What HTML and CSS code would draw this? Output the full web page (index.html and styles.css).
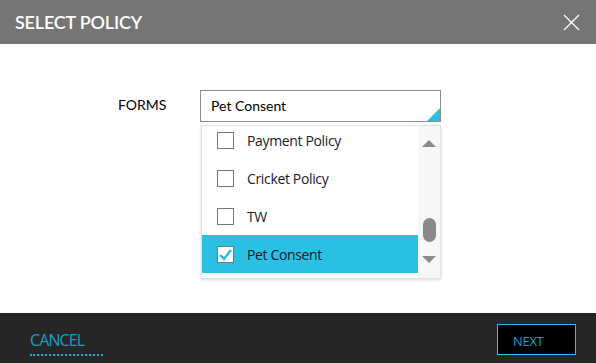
FILE: index.html
```html
<!DOCTYPE html>
<html lang="en">
<head>
    <meta charset="UTF-8">
    <title>Select Policy</title>
    <link rel="stylesheet" href="styles.css">
</head>
<body>
    <div class="dialog">
        <div class="dialog-header">
            <h1>SELECT POLICY</h1>
            <button class="close-btn" aria-label="Close">
                <svg width="17" height="17" viewBox="0 0 17 17">
                    <path d="M1 1 L16 16 M16 1 L1 16" stroke="#fff" stroke-width="1.3" fill="none"/>
                </svg>
            </button>
        </div>

        <div class="dialog-body">
            <div class="form-row">
                <label class="form-label">FORMS</label>
                <div class="select">
                    <div class="select-box">Pet Consent</div>
                    <div class="dropdown">
                        <div class="dropdown-list">
                            <div class="option"><span class="checkbox"></span>Payment Policy</div>
                            <div class="option"><span class="checkbox"></span>Cricket Policy</div>
                            <div class="option"><span class="checkbox"></span>TW</div>
                            <div class="option selected">
                                <span class="checkbox">
                                    <svg width="15" height="15" viewBox="0 0 15 15">
                                        <path d="M2 8 L6 12 L13 3" stroke="#29b9e2" stroke-width="2.4" fill="none"/>
                                    </svg>
                                </span>Pet Consent
                            </div>
                        </div>
                        <div class="scrollbar">
                            <span class="arrow-up"></span>
                            <span class="thumb"></span>
                            <span class="arrow-down"></span>
                        </div>
                    </div>
                </div>
            </div>
        </div>

        <div class="dialog-footer">
            <a class="cancel-link" href="#">CANCEL</a>
            <button class="btn-next">NEXT</button>
        </div>
    </div>
</body>
</html>
```

FILE: styles.css
```css
:root {
    --header-bg: #757575;
    --footer-bg: #262626;
    --accent: #29c0e4;
    --link: #1a9cc7;
}

body {
    margin: 0;
    font-family: 'Lato', 'Open Sans', sans-serif;
    background: #fff;
}

.dialog {
    width: 596px;
    height: 363px;
    display: flex;
    flex-direction: column;
}

.dialog-header {
    height: 44px;
    background: var(--header-bg);
    display: flex;
    align-items: center;
    justify-content: space-between;
    padding: 0 15px 0 15px;
    box-sizing: border-box;
}

.dialog-header h1 {
    margin: 0;
    color: #fff;
    font-size: 18px;
    font-weight: 600;
    letter-spacing: -0.2px;
}

.close-btn {
    background: none;
    border: none;
    padding: 0;
    margin-right: 1px;
    width: 17px;
    height: 17px;
    display: flex;
}

.dialog-body {
    flex: 1;
    padding-top: 46px;
}

.form-row {
    display: flex;
    padding-left: 118px;
}

.form-label {
    width: 82px;
    height: 32px;
    line-height: 30px;
    font-size: 14px;
    color: #000;
}

.select {
    position: relative;
}

.select-box {
    width: 241px;
    height: 32px;
    box-sizing: border-box;
    border: 1px solid #8c8c8c;
    padding-left: 10px;
    line-height: 30px;
    font-size: 14px;
    color: #000;
    position: relative;
}

.select-box::after {
    content: '';
    position: absolute;
    right: 0;
    bottom: 0;
    border-left: 13px solid transparent;
    border-bottom: 13px solid var(--accent);
}

.dropdown {
    position: absolute;
    top: 35px;
    left: 1px;
    width: 240px;
    height: 154px;
    box-sizing: border-box;
    border: 1px solid #e2e2e2;
    background: #fff;
    box-shadow: 0 1px 3px rgba(0, 0, 0, 0.15);
    display: flex;
    overflow: hidden;
}

.dropdown-list {
    width: 216px;
    margin-top: -5px;
    font-family: 'Open Sans', 'Noto Sans', sans-serif;
    font-size: 14px;
    letter-spacing: -0.35px;
    color: #1a1a2a;
}

.option {
    height: 38px;
    display: flex;
    align-items: center;
    padding-left: 15px;
}

.option.selected {
    background: var(--accent);
}

.checkbox {
    width: 17px;
    height: 17px;
    box-sizing: border-box;
    border: 1px solid #777;
    background: #fff;
    margin-right: 13px;
    display: flex;
    align-items: center;
    justify-content: center;
}

.scrollbar {
    flex: 1;
    background: #f7f7f7;
    display: flex;
    flex-direction: column;
    align-items: center;
}

.arrow-up {
    margin-top: 14px;
    border-left: 7.5px solid transparent;
    border-right: 7.5px solid transparent;
    border-bottom: 7px solid #8a8a8a;
}

.thumb {
    margin-top: 71px;
    width: 13px;
    height: 24px;
    border-radius: 7px;
    background: #8a8a8a;
}

.arrow-down {
    margin-top: 14px;
    border-left: 7.5px solid transparent;
    border-right: 7.5px solid transparent;
    border-top: 7px solid #8a8a8a;
}

.dialog-footer {
    height: 50px;
    background: var(--footer-bg);
    display: flex;
    align-items: flex-start;
    justify-content: space-between;
    padding: 0 20px 0 30px;
    box-sizing: border-box;
}

.cancel-link {
    margin-top: 13px;
    width: 73px;
    font-family: 'Open Sans', sans-serif;
    font-size: 16px;
    letter-spacing: -0.9px;
    line-height: 28px;
    color: var(--link);
    text-decoration: none;
    border-bottom: 2px dotted #1aa6d6;
}

.btn-next {
    margin-top: 11px;
    width: 79px;
    height: 31px;
    background: #000;
    border: 1px solid #2bc0e6;
    color: var(--link);
    font-family: 'Open Sans', sans-serif;
    font-size: 13px;
    letter-spacing: -0.3px;
    text-align: left;
    padding: 2px 0 0 15px;
}
```
